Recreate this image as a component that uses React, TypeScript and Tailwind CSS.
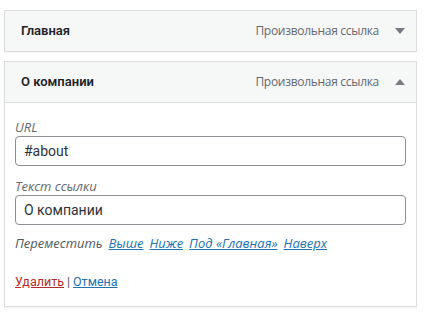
import React from "react";

function Arrow({ up }: { up?: boolean }) {
  return (
    <svg width="10" height="6" viewBox="0 0 10 6" className="text-[#787c82]">
      {up ? <path d="M0 6 L5 0 L10 6 Z" fill="currentColor" /> : <path d="M0 0 L10 0 L5 6 Z" fill="currentColor" />}
    </svg>
  );
}

function ItemBar({ title, up }: { title: string; up?: boolean }) {
  return (
    <div className="flex items-center justify-between h-[40px] pl-[16px] pr-[11px] bg-[#f6f7f7]">
      <span className="text-[13px] font-semibold text-[#1d2327]">{title}</span>
      <div className="flex items-center gap-[16px]">
        <span className="text-[12px] tracking-[-0.3px] text-[#646970] font-['Open_Sans',sans-serif]">Произвольная ссылка</span>
        <Arrow up={up} />
      </div>
    </div>
  );
}

export default function App() {
  return (
    <div className="min-h-screen bg-white pt-[10px] pl-[4px] font-['Roboto',sans-serif]">
      <div className="w-[413px] flex flex-col gap-[9px]">
        {/* collapsed item */}
        <div className="border border-[#dcdcde] shadow-[0_1px_1px_rgba(0,0,0,0.04)]">
          <ItemBar title="Главная" />
        </div>

        {/* expanded item */}
        <div className="border border-[#dcdcde] shadow-[0_1px_1px_rgba(0,0,0,0.04)]">
          <ItemBar title="О компании" up />
          <div className="border-t border-[#dcdcde] bg-white px-[10px] pt-[15px] pb-[15px]">
            <label className="block">
              <span className="block text-[13px] italic text-[#646970] leading-[18px] font-['Open_Sans',sans-serif]">URL</span>
              <input
                readOnly
                value="#about"
                className="w-full h-[30px] border border-[#8c8f94] rounded-[4px] px-[8px] text-[14px] text-[#2c3338] outline-none"
              />
            </label>
            <label className="block mt-[11px]">
              <span className="block text-[13px] italic text-[#646970] leading-[18px] font-['Open_Sans',sans-serif]">Текст ссылки</span>
              <input
                readOnly
                value="О компании"
                className="w-full h-[30px] border border-[#8c8f94] rounded-[4px] px-[8px] text-[14px] text-[#2c3338] outline-none"
              />
            </label>
            <div className="mt-[9px] flex items-center gap-[6px] text-[13px] italic leading-[18px] font-['Open_Sans',sans-serif]">
              <span className="text-[#50575e]">Переместить</span>
              <a href="#" className="text-[#2271b1] underline">Выше</a>
              <a href="#" className="text-[#2271b1] underline">Ниже</a>
              <a href="#" className="text-[#2271b1] underline">Под «Главная»</a>
              <a href="#" className="text-[#2271b1] underline">Наверх</a>
            </div>
            <div className="mt-[21px] text-[12.5px] leading-[18px] text-[#50575e]">
              <a href="#" className="text-[#b32d2e] underline">Удалить</a>
              <span className="mx-[3px]">|</span>
              <a href="#" className="text-[#2271b1] underline">Отмена</a>
            </div>
          </div>
        </div>
      </div>
    </div>
  );
}
